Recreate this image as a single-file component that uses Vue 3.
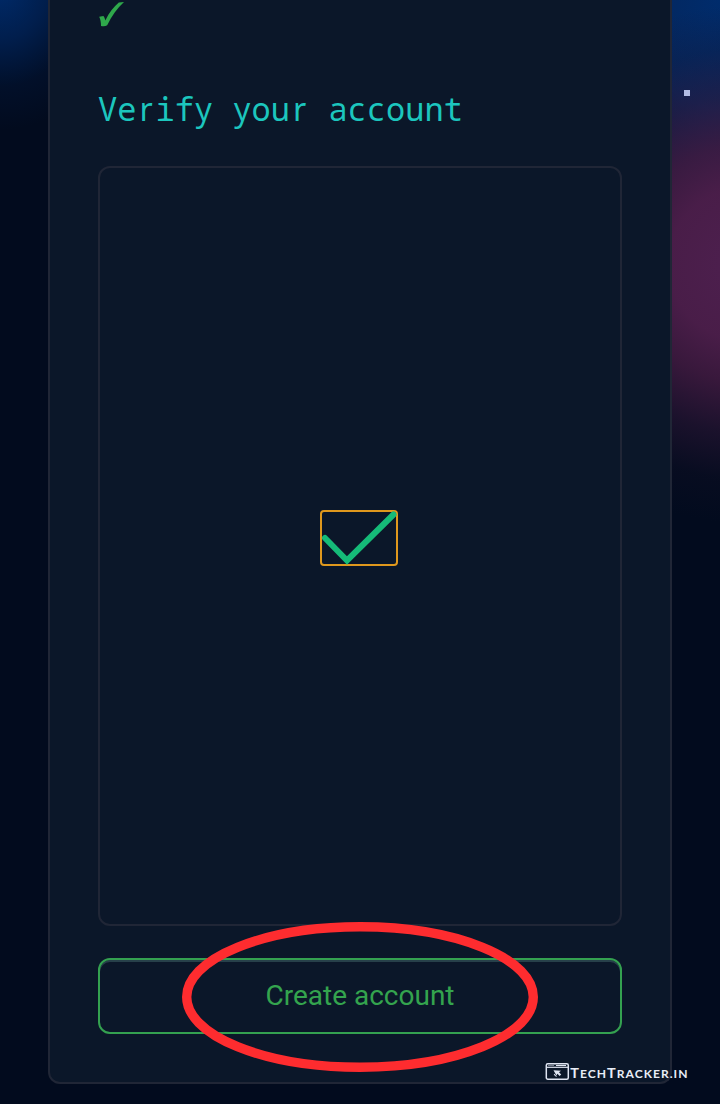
<script setup>
const heading = [...'Verify your account']
</script>

<template>
  <main class="page">
    <i class="star"></i>
    <section class="card">
      <svg class="done" width="28" height="28" viewBox="0 0 28 28">
        <path d="M1.2 16.8 5.4 16C6.6 17.5 7 19 7.3 20.4C11.2 12.7 15.8 6.6 20.8 2.6L26 2C19 8.3 13.8 16 9.2 25.2Q6.7 26.9 3 25.9C3.1 22.5 2.4 19.5 1.2 16.8Z" fill="#2fa84b" />
      </svg>
      <h1 class="heading"><span v-for="(c, i) in heading" :key="i" :class="{ plain: c === 'r' }">{{ c }}</span></h1>
      <div class="challenge">
        <div class="tick">
          <svg width="78" height="56" viewBox="0 0 78 56">
            <path d="M5 28 27 50.5 73.5 4.5" fill="none" stroke="#15bb78" stroke-width="6" stroke-linecap="round" />
          </svg>
        </div>
      </div>
      <button class="create">Create account
        <svg class="ring" width="356" height="150" viewBox="0 0 356 150">
          <ellipse cx="178" cy="75" rx="173.3" ry="70.2" fill="none" stroke="#fe2c2f" stroke-width="9.4" />
        </svg>
      </button>
    </section>
    <svg class="brand" width="146" height="22" viewBox="0 0 146 22">
      <rect x="2.3" y="1.8" width="22" height="15.4" rx="1.5" fill="none" stroke="#dfe5f2" stroke-width="1.5" />
      <path d="M2.5 5.3H24" stroke="#dfe5f2" stroke-width="1.2" />
      <path d="M4.5 3.5H5.5M6.5 3.5H7.5M8.5 3.5H9.5M12 3.5H22" stroke="#dfe5f2" stroke-width="1" />
      <path d="M9.5 8.3 17 8.8 15 10.3 17.2 12.6 15.6 14 13.4 11.8 12.4 13.6ZM10.3 11.8 13 14.4 12 14.8 9.8 12.8Z" fill="#dfe5f2" />
      <text transform="translate(26.3 15.8) scale(1.16 1)" textLength="101" lengthAdjust="spacing">T<tspan class="small">ECH</tspan>T<tspan class="small">RACKER.IN</tspan></text>
    </svg>
  </main>
</template>

<style>
body { background: #020b1e; }
</style>

<style scoped>
.page {
  position: relative;
  box-sizing: border-box;
  height: 1104px;
  overflow: hidden;
  padding: 0 48px 20px;
  background:
    radial-gradient(ellipse 125px 145px at 0 -15px, #002b6b 0%, rgba(0, 38, 96, .7) 38%, rgba(0, 30, 78, .24) 70%, transparent 100%),
    radial-gradient(ellipse 270px 260px at 750px 264px, #4e2050 0%, rgba(76, 30, 74, .96) 30%, rgba(68, 27, 66, .82) 46%, rgba(52, 24, 58, .5) 65%, rgba(30, 18, 42, .2) 83%, transparent 100%),
    radial-gradient(ellipse 190px 240px at 720px 0, #002c6c 0%, #04265c 45%, transparent 100%),
    #020b1e;
}
.star {
  position: absolute;
  left: 684px;
  top: 90px;
  width: 6px;
  height: 6px;
  background: #b2bce4;
}
.card {
  box-sizing: border-box;
  height: 1084px;
  padding: 0 48px 48px;
  border: 2px solid #202636;
  border-top: 0;
  border-radius: 0 0 12px 12px;
  background: #0b1729;
  display: flex;
  flex-direction: column;
}
.done { display: block; }
.heading {
  margin: 57px 0 33px;
  height: 48px;
  font: 400 32px/48px "Noto Sans Mono", "Droid Sans Mono", "DejaVu Sans Mono", monospace;
  color: #1cc6be;
  white-space: pre;
  display: flex;
}
.heading span { flex: 0 0 19.2px; }
.heading .plain {
  font-family: "Noto Sans", sans-serif;
  text-indent: 3px;
}
.challenge {
  box-sizing: border-box;
  height: 760px;
  padding: 0 2px 16px 0;
  border: 2px solid #202636;
  border-radius: 12px;
  display: flex;
  align-items: center;
  justify-content: center;
}
.tick {
  box-sizing: border-box;
  width: 78px;
  height: 56px;
  border: 2px solid #df981d;
  border-radius: 4px;
}
.tick svg { display: block; margin: -2px; }
.create {
  position: relative;
  box-sizing: border-box;
  height: 76px;
  margin-top: 32px;
  padding: 0;
  border: 2px solid #34a150;
  border-radius: 12px;
  background: transparent;
  box-shadow: inset 0 2px 0 #27404a;
  color: #34a44e;
  font: 400 28px/72px Roboto, sans-serif;
}
.ring {
  position: absolute;
  left: 82px;
  top: -38px;
}
.brand {
  position: absolute;
  left: 543.5px;
  top: 1062px;
}
.brand text {
  font: 700 12.5px Lato, sans-serif;
  fill: #e8edf7;
}
.brand .small { font-size: 10.4px; }
</style>
